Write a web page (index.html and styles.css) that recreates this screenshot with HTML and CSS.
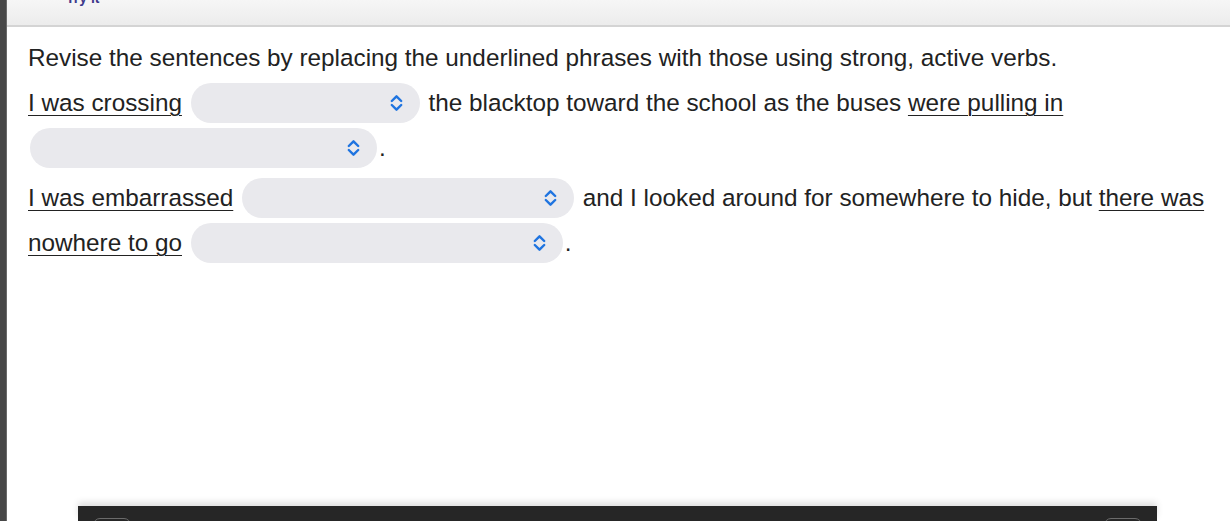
FILE: index.html
```html
<!DOCTYPE html>
<html lang="en">
<head>
<meta charset="utf-8">
<title>Revise the sentences</title>
<link rel="stylesheet" href="styles.css">
</head>
<body>
<div class="page">
  <div class="strip"></div>
  <div class="main">
    <header class="topbar"><span class="tab-label">Try it</span></header>
    <section class="content">
      <p class="prompt">Revise the sentences by replacing the underlined phrases with those using strong, active verbs.</p>
      <p class="sentence"><u>I was crossing</u> <span class="select w229"><svg class="chev" viewBox="0 0 13 18" width="13" height="18"><path d="M1.8 7 L6.5 2.3 L11.2 7 M1.8 11 L6.5 15.7 L11.2 11"/></svg></span> the blacktop toward the school as the buses <u>were pulling in</u> <span class="select w347"><svg class="chev" viewBox="0 0 13 18" width="13" height="18"><path d="M1.8 7 L6.5 2.3 L11.2 7 M1.8 11 L6.5 15.7 L11.2 11"/></svg></span>.</p>
      <p class="sentence"><u>I was embarrassed</u> <span class="select w332"><svg class="chev" viewBox="0 0 13 18" width="13" height="18"><path d="M1.8 7 L6.5 2.3 L11.2 7 M1.8 11 L6.5 15.7 L11.2 11"/></svg></span> and I looked around for somewhere to hide, but <u>there was nowhere to go</u> <span class="select w372"><svg class="chev" viewBox="0 0 13 18" width="13" height="18"><path d="M1.8 7 L6.5 2.3 L11.2 7 M1.8 11 L6.5 15.7 L11.2 11"/></svg></span>.</p>
    </section>
    <div class="toolbar">
      <span class="tool-btn"></span>
      <span class="tool-btn"></span>
    </div>
  </div>
</div>
</body>
</html>
```

FILE: styles.css
```css
* { box-sizing: border-box; }
html, body { margin: 0; padding: 0; }
body {
  width: 1230px;
  height: 521px;
  overflow: hidden;
  background: #ffffff;
  font-family: "Liberation Sans", Arial, sans-serif;
  color: #222222;
}
.page {
  display: flex;
  height: 521px;
}
.strip {
  width: 7px;
  flex: none;
  background: #474747;
  border-right: 1px solid #6a6a6a;
}
.main {
  flex: 1;
  display: flex;
  flex-direction: column;
  min-width: 0;
}
.topbar {
  height: 27px;
  flex: none;
  background: linear-gradient(#f6f6f6, #ececec);
  border-bottom: 2px solid #d4d4d4;
  display: flex;
  align-items: flex-start;
  padding-left: 59px;
  overflow: hidden;
}
.tab-label {
  font-size: 14px;
  font-weight: bold;
  line-height: 16px;
  margin-top: -10px;
  color: #3d3a8c;
}
.content {
  flex: 1;
  padding: 8px 18px 0 21px;
  font-size: 24.3px;
}
.content p { margin: 0; }
.prompt { line-height: 45px; }
.sentence { line-height: 45px; margin-bottom: 5px !important; }
u {
  text-decoration: underline;
  text-decoration-thickness: 1px;
  text-underline-offset: 4px;
}
.select {
  display: inline-flex;
  justify-content: flex-end;
  align-items: center;
  height: 40px;
  border-radius: 20px;
  background: #e9e9ed;
  vertical-align: middle;
  padding-right: 17px;
  margin: 0 2px;
  position: relative;
  top: -2px;
}
.w229 { width: 229px; }
.w347 { width: 347px; }
.w332 { width: 332px; }
.w372 { width: 372px; }
.chev {
  fill: none;
  stroke: #1f74e0;
  stroke-width: 2.4;
  stroke-linecap: round;
  stroke-linejoin: round;
}
.toolbar {
  flex: none;
  height: 15px;
  margin: 0 73px 0 71px;
  background: #262626;
  box-shadow: 0 -4px 6px rgba(0,0,0,0.12);
  display: flex;
  justify-content: space-between;
  padding: 12px 15px 0 15px;
  overflow: hidden;
}
.tool-btn {
  width: 38px;
  height: 30px;
  border: 1.5px solid #6b6b6b;
  border-radius: 7px;
}
```
